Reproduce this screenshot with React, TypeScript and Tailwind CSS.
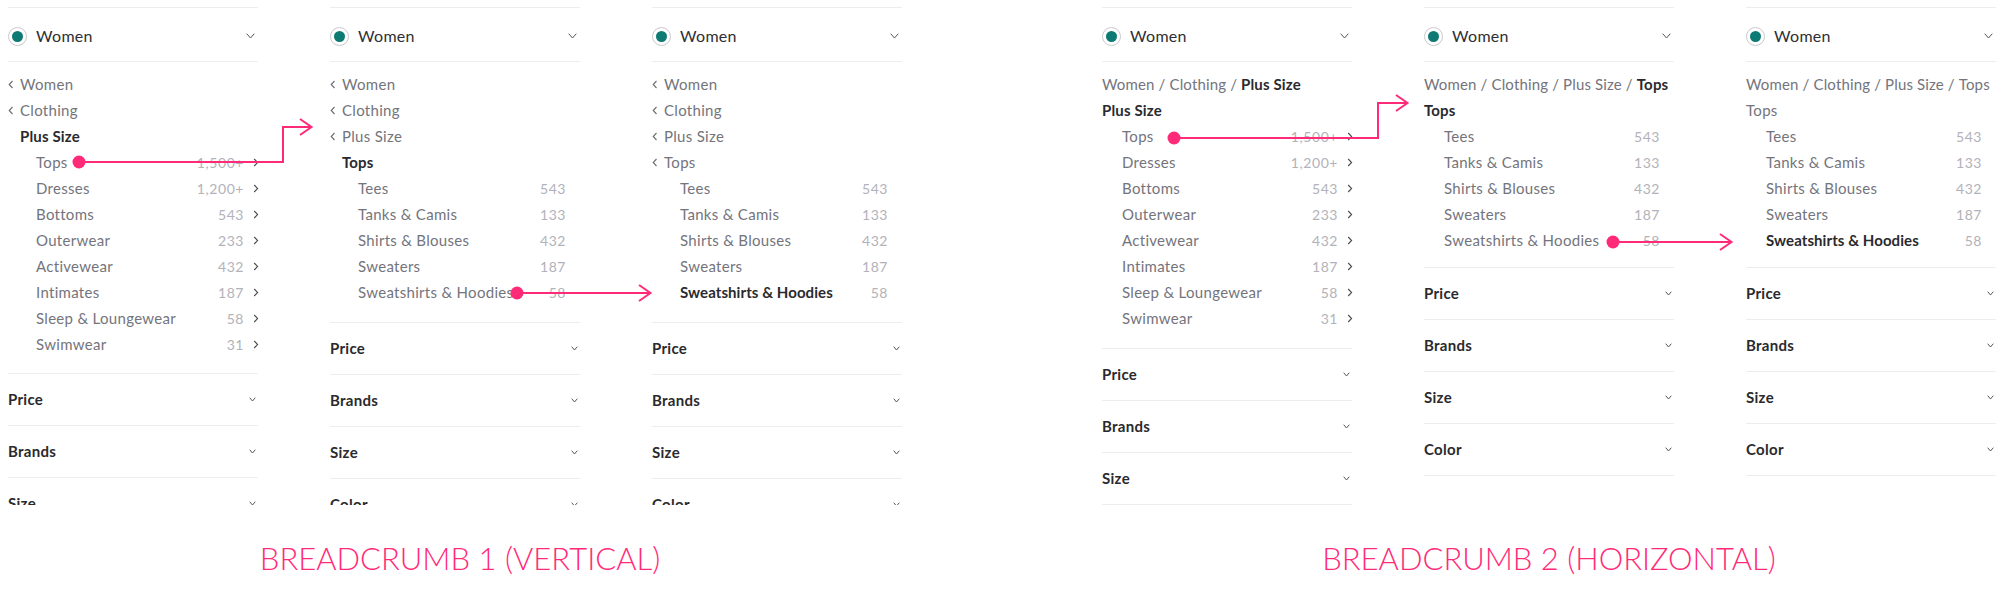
import React from "react";

const PINK = "#ff2b78";

function ChevronLeft() {
  return (
    <svg width="6" height="9" viewBox="0 0 6 9" className="shrink-0">
      <path d="M4.5 1 L1.2 4.5 L4.5 8" fill="none" stroke="#6b6b73" strokeWidth="1.1" />
    </svg>
  );
}

function ChevronRight() {
  return (
    <svg width="6" height="9" viewBox="0 0 6 9" className="shrink-0">
      <path d="M1.2 1 L4.6 4.5 L1.2 8" fill="none" stroke="#4a4a50" strokeWidth="1.1" />
    </svg>
  );
}

function ChevronDown({ w = 9 }: { w?: number }) {
  const h = Math.round(w * 0.55);
  return (
    <svg width={w} height={h + 1} viewBox={`0 0 ${w} ${h + 1}`} className="shrink-0">
      <path d={`M0.7 0.7 L${w / 2} ${h} L${w - 0.7} 0.7`} fill="none" stroke="#55555b" strokeWidth="1" />
    </svg>
  );
}

function Header() {
  return (
    <div className="h-[55px] border-y border-[#ececf1] flex items-center justify-between pr-[3px] pt-[3px]">
      <div className="flex items-center">
        <div className="w-[19px] h-[19px] rounded-full border border-[#c9c9ce] flex items-center justify-center">
          <div className="w-[11px] h-[11px] rounded-full bg-[#0d7b74]" />
        </div>
        <span className="ml-[9px] text-[16px] text-[#2e2e33] tracking-[0.02em]">Women</span>
      </div>
      <ChevronDown w={9} />
    </div>
  );
}

function BackRow({ label }: { label: string }) {
  return (
    <div className="h-[26px] flex items-center">
      <div className="w-[12px] flex items-center">
        <ChevronLeft />
      </div>
      <span className="text-[15px] text-[#74747c] tracking-[0.02em]">{label}</span>
    </div>
  );
}

function CurrentRow({ label, indent, bold = true }: { label: string; indent: string; bold?: boolean }) {
  return (
    <div className={`h-[26px] flex items-center ${indent}`}>
      <span
        className={
          bold
            ? "text-[15px] font-bold text-[#2a2a2e] tracking-[0.01em]"
            : "text-[15px] text-[#74747c] tracking-[0.02em]"
        }
      >
        {label}
      </span>
    </div>
  );
}

function ChildRow({
  label,
  count,
  chevron,
  bold,
  indent,
}: {
  label: string;
  count: string;
  chevron?: boolean;
  bold?: boolean;
  indent: string;
}) {
  return (
    <div className={`h-[26px] flex items-center ${indent}`}>
      <span
        className={
          bold
            ? "flex-1 text-[15px] font-bold text-[#2a2a2e] tracking-[0.005em]"
            : "flex-1 text-[15px] text-[#74747c] tracking-[0.02em]"
        }
      >
        {label}
      </span>
      <span className="text-[14px] text-[#b2b2ba] tracking-[0.04em]">{count}</span>
      <div className="w-[14px] flex items-center pl-[9px]">{chevron ? <ChevronRight /> : null}</div>
    </div>
  );
}

function CrumbRow({ parts, boldLast }: { parts: string[]; boldLast: boolean }) {
  return (
    <div className="h-[26px] flex items-center text-[15px] tracking-[0.01em] whitespace-pre">
      {parts.map((p, i) => {
        const last = i === parts.length - 1;
        return (
          <React.Fragment key={i}>
            {i > 0 ? <span className="text-[#74747c]">{" / "}</span> : null}
            <span className={last && boldLast ? "font-bold text-[#2a2a2e]" : "text-[#74747c]"}>{p}</span>
          </React.Fragment>
        );
      })}
    </div>
  );
}

function Sections() {
  const names = ["Price", "Brands", "Size", "Color"];
  return (
    <div className="border-t border-[#ececf1]">
      {names.map((n) => (
        <div
          key={n}
          className="h-[52px] border-b border-[#ececf1] flex items-center justify-between pr-[2px]"
        >
          <span className="text-[15px] font-bold text-[#2a2a2e] tracking-[0.02em]">{n}</span>
          <ChevronDown w={7} />
        </div>
      ))}
    </div>
  );
}

function Panel({ children, pb }: { children: React.ReactNode; pb: string }) {
  return (
    <div className="w-[250px] shrink-0">
      <Header />
      <div className={`pt-[9px] ${pb}`}>{children}</div>
      <Sections />
    </div>
  );
}

const plusChildren: [string, string][] = [
  ["Tops", "1,500+"],
  ["Dresses", "1,200+"],
  ["Bottoms", "543"],
  ["Outerwear", "233"],
  ["Activewear", "432"],
  ["Intimates", "187"],
  ["Sleep & Loungewear", "58"],
  ["Swimwear", "31"],
];

const topsChildren: [string, string][] = [
  ["Tees", "543"],
  ["Tanks & Camis", "133"],
  ["Shirts & Blouses", "432"],
  ["Sweaters", "187"],
  ["Sweatshirts & Hoodies", "58"],
];

function Arrows() {
  return (
    <svg
      className="absolute left-0 top-0 pointer-events-none"
      width="2004"
      height="599"
      viewBox="0 0 2004 599"
    >
      <g fill="none" stroke={PINK} strokeWidth="2" strokeLinejoin="miter">
        <path d="M79 162 H283 V127 H311" />
        <path d="M300 119 L311.5 127 L300 135" />
        <path d="M517 293 H650" />
        <path d="M639 285 L650.5 293 L639 301" />
        <path d="M1174 138 H1378 V103 H1407" />
        <path d="M1396 95 L1407.5 103 L1396 111" />
        <path d="M1613 242 H1731" />
        <path d="M1720 234 L1731.5 242 L1720 250" />
      </g>
      <g fill={PINK}>
        <circle cx="79" cy="162" r="6.5" />
        <circle cx="517" cy="293" r="6.5" />
        <circle cx="1174" cy="138" r="6.5" />
        <circle cx="1613" cy="242" r="6.5" />
      </g>
    </svg>
  );
}

export default function App() {
  return (
    <div className="relative w-[2004px] h-[599px] bg-white overflow-hidden font-['Lato',sans-serif]">
      <div className="flex pl-[8px] gap-[200px]">
        {/* Group 1: vertical */}
        <div className="flex flex-col">
          <div className="flex gap-[72px] pt-[7px] h-[505px] overflow-hidden">
            <Panel pb="pb-[16px]">
              <BackRow label="Women" />
              <BackRow label="Clothing" />
              <CurrentRow label="Plus Size" indent="pl-[12px]" />
              {plusChildren.map(([l, c]) => (
                <ChildRow key={l} label={l} count={c} chevron indent="pl-[28px]" />
              ))}
            </Panel>
            <Panel pb="pb-[17px]">
              <BackRow label="Women" />
              <BackRow label="Clothing" />
              <BackRow label="Plus Size" />
              <CurrentRow label="Tops" indent="pl-[12px]" />
              {topsChildren.map(([l, c]) => (
                <ChildRow key={l} label={l} count={c} indent="pl-[28px]" />
              ))}
            </Panel>
            <Panel pb="pb-[17px]">
              <BackRow label="Women" />
              <BackRow label="Clothing" />
              <BackRow label="Plus Size" />
              <BackRow label="Tops" />
              {topsChildren.map(([l, c]) => (
                <ChildRow
                  key={l}
                  label={l}
                  count={c}
                  bold={l === "Sweatshirts & Hoodies"}
                  indent="pl-[28px]"
                />
              ))}
            </Panel>
          </div>
          <div className="mt-[38px] pl-[10px] text-center text-[31px] leading-none font-light text-[#ff2b78]">
            BREADCRUMB 1 (VERTICAL)
          </div>
        </div>

        {/* Group 2: horizontal */}
        <div className="flex flex-col">
          <div className="flex gap-[72px] pt-[7px] h-[505px] overflow-hidden">
            <Panel pb="pb-[17px]">
              <CrumbRow parts={["Women", "Clothing", "Plus Size"]} boldLast />
              <CurrentRow label="Plus Size" indent="pl-0" />
              {plusChildren.map(([l, c]) => (
                <ChildRow key={l} label={l} count={c} chevron indent="pl-[20px]" />
              ))}
            </Panel>
            <Panel pb="pb-[14px]">
              <CrumbRow parts={["Women", "Clothing", "Plus Size", "Tops"]} boldLast />
              <CurrentRow label="Tops" indent="pl-0" />
              {topsChildren.map(([l, c]) => (
                <ChildRow key={l} label={l} count={c} indent="pl-[20px]" />
              ))}
            </Panel>
            <Panel pb="pb-[14px]">
              <CrumbRow parts={["Women", "Clothing", "Plus Size", "Tops"]} boldLast={false} />
              <CurrentRow label="Tops" indent="pl-0" bold={false} />
              {topsChildren.map(([l, c]) => (
                <ChildRow
                  key={l}
                  label={l}
                  count={c}
                  bold={l === "Sweatshirts & Hoodies"}
                  indent="pl-[20px]"
                />
              ))}
            </Panel>
          </div>
          <div className="mt-[38px] text-center text-[31px] leading-none font-light text-[#ff2b78]">
            BREADCRUMB 2 (HORIZONTAL)
          </div>
        </div>
      </div>
      <Arrows />
    </div>
  );
}
